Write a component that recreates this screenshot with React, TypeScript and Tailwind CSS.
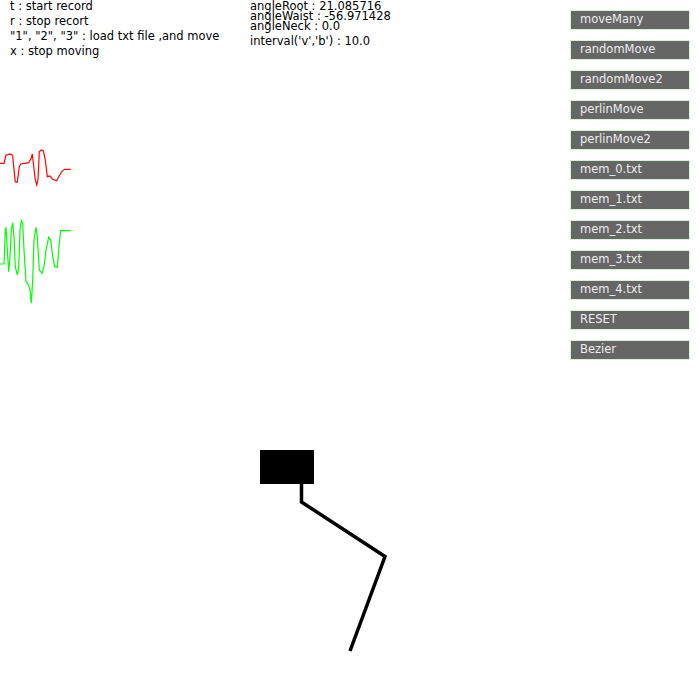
const buttons = [
  "moveMany",
  "randomMove",
  "randomMove2",
  "perlinMove",
  "perlinMove2",
  "mem_0.txt",
  "mem_1.txt",
  "mem_2.txt",
  "mem_3.txt",
  "mem_4.txt",
  "RESET",
  "Bezier",
]

const redWave =
  "0,163.3 4,163.3 6,155.3 10,154 12.7,155.3 13.3,163 15.3,181.7 17.3,182.3 19.3,166.7 20.7,164 24,163.3 28.7,162.7 31.3,158 32.3,154 33.3,163 35.3,180 36.7,185 38,180 39.3,151.7 41.3,150 43.3,150.7 45.3,160 47.3,176.7 50,176 52.7,179.3 56.7,180.7 58.7,176.7 62,171.3 64.7,169.3 70.7,169.3"

const greenWave =
  "0,264 4,264 5.3,230 6,227.3 7.3,250 8.7,271.7 10,256.7 11.3,230 12.7,222.7 14,236.7 15.3,266.7 17.3,275 18.7,266.7 20,230 21.3,220.7 22.7,223.3 24,250 26,281.7 28.7,285 30,290 31.3,303.3 32.7,280 34,240 36,227.3 37.3,236.7 39.3,270 42,273.3 44,266.7 46,250 48.7,237.3 50.7,240 52.7,256.7 54.7,266.7 57.3,267.3 59.3,243.3 60.7,230.7 70.7,230.7"

export default function App() {
  return (
    <div className="relative w-[700px] h-[700px] bg-white overflow-hidden text-black font-['DejaVu_Sans',sans-serif] text-[11.5px]">
      <div className="flex">
        {/* key help */}
        <div className="w-[250px] pl-[10px] mt-[-1px] leading-[15px]">
          <div>t : start record</div>
          <div>r : stop recort</div>
          <div>"1", "2", "3" : load txt file ,and move</div>
          <div>x : stop moving</div>
        </div>

        {/* angles */}
        <div className="w-[320px] mt-[1px] leading-[10px]">
          <div>angleRoot : 21.085716</div>
          <div>angleWaist : -56.971428</div>
          <div>angleNeck : 0.0</div>
          <div className="mt-[5px]">interval('v','b') : 10.0</div>
        </div>

        {/* controls */}
        <div className="flex flex-col gap-[10px] pt-[10px]">
          {buttons.map(label => (
            <div
              key={label}
              className="flex items-center w-[120px] h-[20px] pl-[9px] bg-[#666666] border border-[#d4f2d4] text-[#ededed]"
            >
              {label}
            </div>
          ))}
        </div>
      </div>

      {/* sketch canvas */}
      <svg className="absolute left-0 top-0" width="700" height="700" viewBox="0 0 700 700">
        <polyline points={redWave} fill="none" stroke="#ff0000" strokeWidth="1.2" />
        <polyline points={greenWave} fill="none" stroke="#00ff00" strokeWidth="1.2" />
        <rect x="260" y="450" width="54" height="34" fill="#000" />
        <polyline
          points="301.5,484 301.5,502 385,556.5 350,651"
          fill="none"
          stroke="#000"
          strokeWidth="3.5"
          strokeLinejoin="miter"
        />
      </svg>
    </div>
  )
}
